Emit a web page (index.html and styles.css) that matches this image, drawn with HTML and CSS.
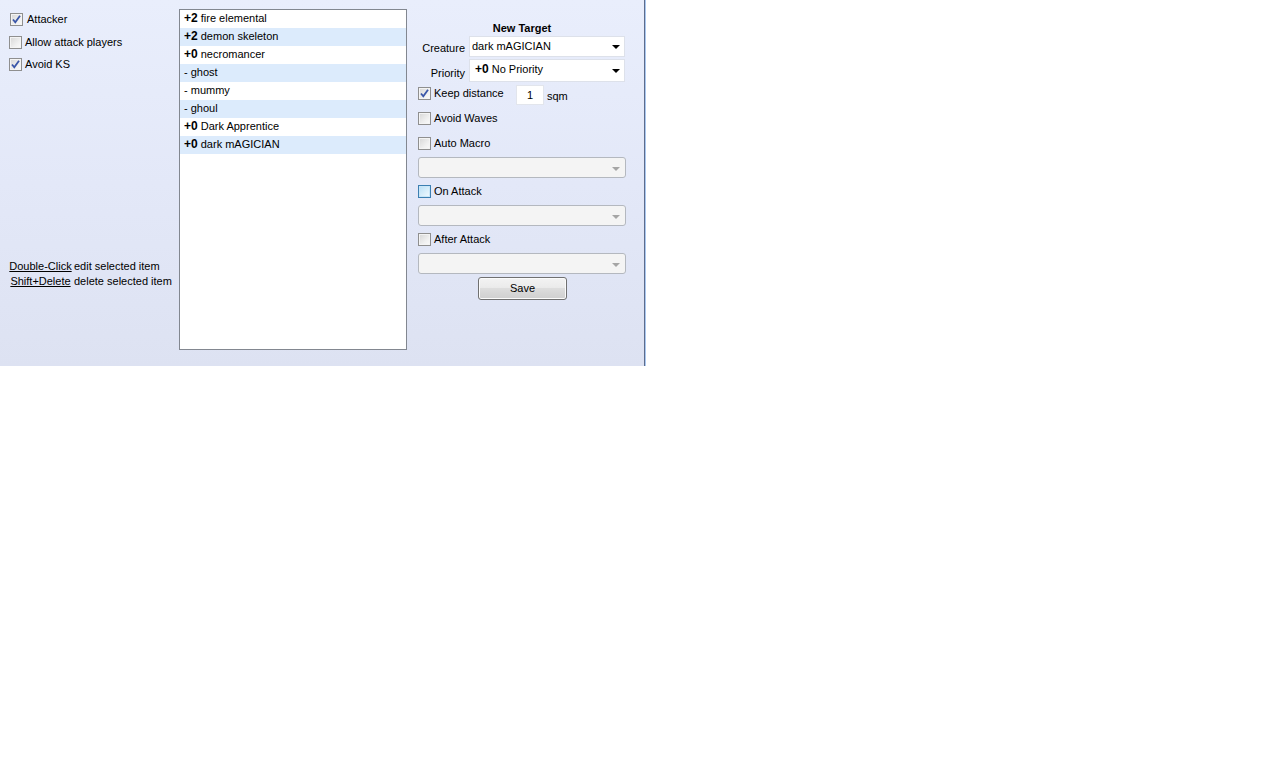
FILE: index.html
```html
<!DOCTYPE html>
<html>
<head>
<meta charset="utf-8">
<link rel="stylesheet" href="styles.css">
</head>
<body>
<div class="panel">
  <div class="left">
    <div class="chk-row r1"><span class="cb checked"><svg viewBox="0 0 11 11" width="11" height="11"><path d="M2 5.5 L4.3 8.3 L9 1.8" fill="none" stroke="#3a56a8" stroke-width="1.8"/></svg></span><span>Attacker</span></div>
    <div class="chk-row r2"><span class="cb"></span><span>Allow attack players</span></div>
    <div class="chk-row r3"><span class="cb checked"><svg viewBox="0 0 11 11" width="11" height="11"><path d="M2 5.5 L4.3 8.3 L9 1.8" fill="none" stroke="#3a56a8" stroke-width="1.8"/></svg></span><span>Avoid KS</span></div>
    <div class="hints">
      <div class="hint"><span class="key">Double-Click</span><span>edit selected item</span></div>
      <div class="hint"><span class="key">Shift+Delete</span><span>delete selected item</span></div>
    </div>
  </div>
  <div class="list">
    <div class="item"><b>+2</b> fire elemental</div>
    <div class="item alt"><b>+2</b> demon skeleton</div>
    <div class="item"><b>+0</b> necromancer</div>
    <div class="item alt">- ghost</div>
    <div class="item">- mummy</div>
    <div class="item alt">- ghoul</div>
    <div class="item"><b>+0</b> Dark Apprentice</div>
    <div class="item alt"><b>+0</b> dark mAGICIAN</div>
  </div>
  <div class="right">
    <div class="title">New Target</div>
    <div class="field-row fr1">
      <span class="flabel">Creature</span>
      <div class="combo"><span>dark mAGICIAN</span><span class="arrow"></span></div>
    </div>
    <div class="field-row fr2">
      <span class="flabel">Priority</span>
      <div class="combo tall"><span><b>+0</b> No Priority</span><span class="arrow"></span></div>
    </div>
    <div class="keep-row">
      <div class="chk-row"><span class="cb checked"><svg viewBox="0 0 11 11" width="11" height="11"><path d="M2 5.5 L4.3 8.3 L9 1.8" fill="none" stroke="#3a56a8" stroke-width="1.8"/></svg></span><span>Keep distance</span></div>
      <div class="num">1</div>
      <span class="sqm">sqm</span>
    </div>
    <div class="chk-row rw1"><span class="cb"></span><span>Avoid Waves</span></div>
    <div class="chk-row rw2"><span class="cb"></span><span>Auto Macro</span></div>
    <div class="dcombo"><span class="darrow"></span></div>
    <div class="chk-row rw3"><span class="cb hover"></span><span>On Attack</span></div>
    <div class="dcombo"><span class="darrow"></span></div>
    <div class="chk-row rw4"><span class="cb"></span><span>After Attack</span></div>
    <div class="dcombo"><span class="darrow"></span></div>
    <div class="btn-row"><div class="btn">Save</div></div>
  </div>
</div>
</body>
</html>
```
FILE: styles.css
```css
html, body {
  margin: 0;
  padding: 0;
  background: #ffffff;
}
body {
  font-family: "Liberation Sans", Arial, sans-serif;
  font-size: 11px;
  color: #000;
}
.panel {
  width: 645px;
  height: 366px;
  display: flex;
  background: linear-gradient(to bottom, #e9eefc 0%, #e3e8f8 50%, #dde2f2 100%);
  border-right: 1px solid #5d6c8c;
  box-shadow: 1px 0 0 #a9c7ef;
  box-sizing: border-box;
}
.left {
  width: 179px;
  padding-left: 10px;
  box-sizing: border-box;
  display: flex;
  flex-direction: column;
}
.chk-row {
  display: flex;
  align-items: center;
  height: 13px;
  line-height: 13px;
  white-space: nowrap;
  flex: none;
}
.chk-row .cb {
  margin-right: 3px;
}
.r1 { margin-top: 13px; }
.r1 span:last-child { margin-left: 1px; }
.r2 { margin-top: 10px; margin-left: -1px; }
.r3 { margin-top: 9px; margin-left: -1px; }
.cb {
  width: 11px;
  height: 11px;
  border: 1px solid #8f8f8f;
  background: linear-gradient(135deg, #d6d6d6 0%, #efefef 60%, #fbfbfb 100%);
  box-shadow: inset 0 0 0 1px #f4f4f4;
  display: inline-flex;
  align-items: center;
  justify-content: center;
  flex: none;
}
.cb.hover {
  border-color: #3c7fb1;
  background: linear-gradient(135deg, #b9dff6 0%, #dcf0fb 60%, #f2faff 100%);
  box-shadow: inset 0 0 0 1px #c9e6f8;
}
.hints {
  margin-top: 187px;
  margin-left: -1px;
}
.hint {
  display: flex;
  height: 15px;
  align-items: center;
  white-space: nowrap;
}
.key {
  width: 63px;
  text-align: center;
  text-decoration: underline;
  margin-right: 2px;
}
.list {
  width: 228px;
  height: 341px;
  margin-top: 9px;
  background: #fff;
  border: 1px solid #828790;
  box-sizing: border-box;
  flex: none;
}
.item {
  height: 18px;
  line-height: 17px;
  padding-left: 4px;
  white-space: nowrap;
}
.item b {
  font-size: 12px;
}
.item.alt {
  background: #dcebfc;
}
.right {
  width: 208px;
  margin-left: 11px;
  display: flex;
  flex-direction: column;
}
.title {
  margin-top: 21px;
  height: 14px;
  line-height: 14px;
  text-align: center;
  font-weight: bold;
  font-size: 11px;
}
.field-row {
  display: flex;
  align-items: flex-end;
}
.fr1 { margin-top: 1px; }
.fr2 { margin-top: 2px; }
.flabel {
  width: 47px;
  text-align: right;
  margin-right: 4px;
  padding-bottom: 2px;
  line-height: 13px;
}
.combo {
  width: 156px;
  height: 21px;
  background: #fff;
  border: 1px solid #dde1ea;
  box-sizing: border-box;
  display: flex;
  align-items: center;
  justify-content: space-between;
  padding: 0 4px 0 2px;
}
.combo > span:first-child { margin-top: -2px; }
.combo.tall {
  height: 23px;
  padding-left: 5px;
}
.combo.tall span:first-child {
  margin-top: -4px;
}
.combo b { font-size: 12px; }
.arrow {
  width: 0;
  height: 0;
  border-left: 4px solid transparent;
  border-right: 4px solid transparent;
  border-top: 4px solid #000;
  margin-top: 1px;
}
.keep-row {
  display: flex;
  align-items: flex-start;
  margin-top: 3px;
  height: 20px;
}
.keep-row .chk-row {
  margin-top: 2px;
  width: 98px;
}
.num {
  width: 28px;
  height: 20px;
  background: #fff;
  border: 1px solid #e2e5ec;
  box-sizing: border-box;
  text-align: center;
  line-height: 19px;
}
.sqm {
  margin-left: 3px;
  margin-top: 5px;
}
.rw1 { margin-top: 7px; }
.rw2 { margin-top: 12px; }
.rw3 { margin-top: 7px; }
.rw4 { margin-top: 7px; }
.dcombo {
  width: 208px;
  height: 21px;
  margin-top: 7px;
  border: 1px solid #b4b8bf;
  border-radius: 3px;
  background: #f4f4f4;
  box-sizing: border-box;
  display: flex;
  align-items: center;
  justify-content: flex-end;
  padding-right: 5px;
  flex: none;
}
.darrow {
  width: 0;
  height: 0;
  border-left: 4px solid transparent;
  border-right: 4px solid transparent;
  border-top: 4px solid #a5a5a5;
  margin-top: 2px;
}
.btn-row {
  display: flex;
  margin-top: 3px;
  padding-left: 60px;
}
.btn {
  width: 89px;
  height: 23px;
  border: 1px solid #707070;
  border-radius: 3px;
  box-sizing: border-box;
  background: linear-gradient(to bottom, #f3f3f3 0%, #ebebeb 45%, #dddddd 50%, #cfcfcf 100%);
  box-shadow: inset 0 0 0 1px #fbfbfb;
  text-align: center;
  line-height: 21px;
}
```
